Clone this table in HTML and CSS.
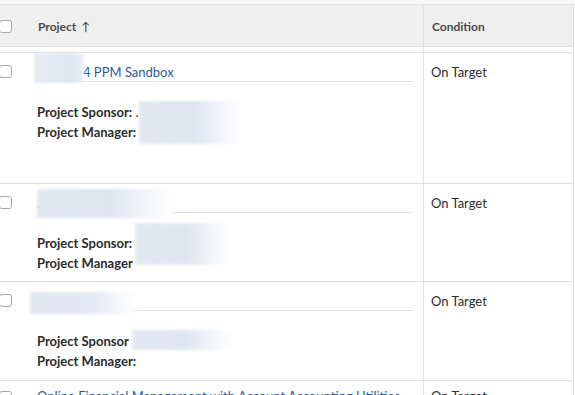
FILE: index.html
```html
<!DOCTYPE html>
<html>
<head>
<meta charset="utf-8">
<link rel="stylesheet" href="styles.css">
</head>
<body>
<div class="topstrip"></div>
<div class="grid">
  <div class="head">
    <div class="cbcol"><span class="cb"></span></div>
    <div class="pcol hcell">Project <span class="arrow">↑</span></div>
    <div class="ccol hcell">Condition</div>
  </div>
  <div class="spacer">
    <div class="cbcol"></div>
    <div class="pcol"></div>
    <div class="ccol"></div>
  </div>

  <div class="row row-tall">
    <div class="cbcol"><span class="cb"></span></div>
    <div class="pcol">
      <div class="title"><span class="blur b1"></span><a class="link pad46">4 PPM Sandbox</a></div>
      <div class="details">
        <div class="line"><b>Project Sponsor:</b> <span class="dot">.</span><span class="blur s1"></span></div>
        <div class="line"><b>Project Manager:</b></div>
      </div>
    </div>
    <div class="ccol cond">On Target</div>
  </div>

  <div class="row">
    <div class="cbcol"><span class="cb"></span></div>
    <div class="pcol">
      <div class="title"><a class="link">.</a><span class="blur b2"></span></div>
      <div class="details">
        <div class="line"><b>Project Sponsor:</b><span class="blur s2"></span></div>
        <div class="line"><b>Project Manager</b></div>
      </div>
    </div>
    <div class="ccol cond">On Target</div>
  </div>

  <div class="row row3">
    <div class="cbcol"><span class="cb"></span></div>
    <div class="pcol">
      <div class="title"><span class="blur b3"></span></div>
      <div class="details">
        <div class="line"><b>Project Sponsor</b><span class="blur s3"></span></div>
        <div class="line"><b>Project Manager:</b></div>
      </div>
    </div>
    <div class="ccol cond">On Target</div>
  </div>

  <div class="row row4">
    <div class="cbcol"><span class="cb"></span></div>
    <div class="pcol">
      <div class="title"><a class="link">Online Financial Management with Account Accounting Utilities</a></div>
    </div>
    <div class="ccol cond">On Target</div>
  </div>
</div>
</body>
</html>
```

FILE: styles.css
```css
html, body {
  margin: 0;
  padding: 0;
  background: #ffffff;
  font-family: "Lato", "Open Sans", sans-serif;
  overflow: hidden;
}
.topstrip {
  height: 5px;
  background: #f8f8f8;
  border-bottom: 1px solid #e6e6e6;
  box-sizing: border-box;
}
.grid {
  width: 574px;
  border-right: 1px solid #dcdcdc;
  box-sizing: border-box;
}
.head, .spacer, .row {
  display: flex;
}
.head {
  height: 41px;
  background: #efefef;
  border-bottom: 1px solid #e0e0e0;
}
.spacer {
  height: 5px;
}
.cbcol {
  width: 30px;
  flex: none;
  position: relative;
}
.pcol {
  width: 394px;
  flex: none;
  padding: 0 10px 8px 7px;
  box-sizing: border-box;
  border-right: 1px solid #e2e2e2;
  position: relative;
}
.ccol {
  flex: 1;
  padding-left: 7px;
}
.hcell {
  display: flex;
  align-items: center;
  padding-top: 1px;
  font-size: 12px;
  font-weight: 700;
  color: #4b4b4b;
}
.head .pcol { padding-left: 8px; padding-bottom: 0; }
.head .ccol { padding-left: 8px; }
.spacer .pcol { padding-bottom: 0; }
.arrow {
  font-weight: 400;
  margin-left: 5px;
  font-size: 12px;
  color: #333;
}
.cb {
  position: absolute;
  left: -1px;
  width: 13px;
  height: 13px;
  border: 1px solid #a8a8a8;
  border-radius: 3px;
  box-sizing: border-box;
  background: #fff;
}
.head .cb { top: 15px; }
.row .cb { top: 12px; }
.row {
  border-top: 1px solid #dedede;
}
.row-tall .pcol { padding-bottom: 41px; }
.row3 .pcol { padding-bottom: 9px; }
.title {
  position: relative;
  padding-top: 11px;
  height: 17px;
  line-height: 17px;
  border-bottom: 1px solid #e0e0e0;
  font-size: 13px;
}
.row4 .title { padding-top: 7px; }
.row4 .cond { padding-top: 7px; }
.row4 .cb { top: 10px; }
.link {
  color: #2b5c98;
  text-decoration: none;
  white-space: nowrap;
}
.pad46 { padding-left: 46px; }
.details {
  margin-top: 20px;
  font-size: 13px;
  color: #2c2c2c;
}
.line {
  position: relative;
  height: 20px;
  line-height: 20px;
}
.line b { font-weight: 700; }
.dot { color: #2c2c2c; }
.cond {
  padding-top: 11px;
  line-height: 17px;
  font-size: 13px;
  color: #2c2c2c;
}
.blur {
  position: absolute;
  display: block;
  filter: blur(1.5px);
}
.b1 {
  left: -3px; top: 0;
  width: 50px; height: 30px;
  background: linear-gradient(90deg, #e6ebf3 0%, #e2e8f1 80%, #eef1f6 100%);
}
.b2 {
  left: 0; top: 5px;
  width: 135px; height: 29px;
  background: linear-gradient(90deg, #e2e8f1 0%, #dfe5ef 55%, #ffffff 100%);
}
.b3 {
  left: -7px; top: 10px;
  width: 105px; height: 22px;
  background: linear-gradient(90deg, #dfe5ef 0%, #e4e9f1 60%, #ffffff 100%);
}
.s1 {
  left: 102px; top: -1px;
  width: 101px; height: 43px;
  background: linear-gradient(90deg, #e3e8f0 0%, #dfe5ee 55%, #ffffff 100%);
}
.s2 {
  left: 98px; top: -10px;
  width: 95px; height: 42px;
  background: linear-gradient(90deg, #e3e8f0 0%, #dfe5ee 55%, #ffffff 100%);
}
.s3 {
  left: 95px; top: -1px;
  width: 100px; height: 20px;
  background: linear-gradient(90deg, #e3e8f0 0%, #dfe5ee 55%, #ffffff 100%);
}
```
